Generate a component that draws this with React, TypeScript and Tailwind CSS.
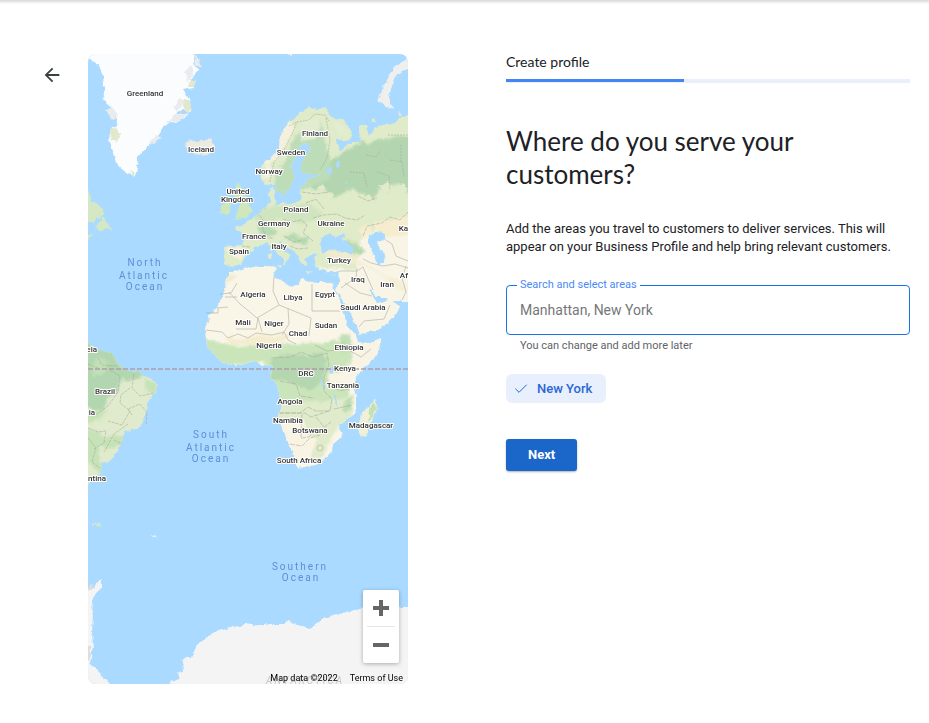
import React from "react";
import { Check } from "lucide-react";

type MapLabel = { text: string; x: number; y: number };

const countries: MapLabel[] = [
  { text: "Greenland", x: 145, y: 96 },
  { text: "Iceland", x: 201, y: 152 },
  { text: "Finland", x: 315, y: 136 },
  { text: "Sweden", x: 291, y: 155 },
  { text: "Norway", x: 269, y: 174 },
  { text: "United", x: 238, y: 194 },
  { text: "Kingdom", x: 237, y: 202 },
  { text: "Poland", x: 296, y: 212 },
  { text: "Germany", x: 274, y: 226 },
  { text: "Ukraine", x: 331, y: 226 },
  { text: "France", x: 254, y: 239 },
  { text: "Italy", x: 279, y: 249 },
  { text: "Spain", x: 239, y: 254 },
  { text: "Turkey", x: 339, y: 263 },
  { text: "Iraq", x: 358, y: 282 },
  { text: "Iran", x: 387, y: 287 },
  { text: "Algeria", x: 253, y: 297 },
  { text: "Libya", x: 293, y: 300 },
  { text: "Egypt", x: 325, y: 297 },
  { text: "Saudi Arabia", x: 363, y: 310 },
  { text: "Mali", x: 243, y: 325 },
  { text: "Niger", x: 274, y: 326 },
  { text: "Sudan", x: 326, y: 328 },
  { text: "Chad", x: 298, y: 336 },
  { text: "Nigeria", x: 269, y: 348 },
  { text: "Ethiopia", x: 349, y: 350 },
  { text: "Kenya", x: 345, y: 371 },
  { text: "DRC", x: 306, y: 376 },
  { text: "Tanzania", x: 343, y: 388 },
  { text: "Angola", x: 290, y: 404 },
  { text: "Namibia", x: 288, y: 423 },
  { text: "Botswana", x: 310, y: 433 },
  { text: "Madagascar", x: 371, y: 428 },
  { text: "South Africa", x: 299, y: 463 },
  { text: "Brazil", x: 105, y: 394 },
];

// names that run off the side of the map
const edgeLeft: MapLabel[] = [
  { text: "ela", x: 97, y: 352 },
  { text: "ia", x: 95, y: 415 },
  { text: "ntina", x: 106, y: 481 },
];
const edgeRight: MapLabel[] = [
  { text: "Ka", x: 408, y: 231 },
  { text: "Af", x: 408, y: 278 },
];

const oceans: MapLabel[] = [
  { text: "North", x: 145, y: 266 },
  { text: "Atlantic", x: 144, y: 279 },
  { text: "Ocean", x: 145, y: 290 },
  { text: "South", x: 211, y: 438 },
  { text: "Atlantic", x: 211, y: 451 },
  { text: "Ocean", x: 211, y: 462 },
  { text: "Southern", x: 300, y: 570 },
  { text: "Ocean", x: 301, y: 581 },
];

const EUROPE =
  "M225 247L243 246L246 239L243 234L236 230L237 227L246 226L248 222L256 218L262 212L267 208L271 202L270 193L274 188L277 191L275 198L277 206L284 203L292 205L301 202L302 190L308 180L323 176L302 174L303 163L312 150L310 144L303 145L292 167L296 178L290 190L283 197L277 186L270 186L263 183L262 167L272 158L280 150L281 138L288 125L298 116L310 108L317 111L325 108L333 118L343 121L352 130L353 138L348 142L337 140L338 147L342 152L350 145L356 142L363 143L360 133L360 127L367 127L370 137L376 129L383 125L393 125L403 118L414 115V302H395L385 298L377 298L373 291L371 290L375 300L379 303L387 302L392 298L394 303L401 308L396 317L387 325L377 332L360 336L357 327L352 315L344 302L337 292L340 282L341 272L332 273L324 270L320 271L316 266L315 259L318 255L310 257L306 261L309 267L303 266L300 260L296 253L287 247L281 242L280 245L286 252L291 257L288 261L285 267L284 260L278 254L273 248L268 243L260 248L255 249L249 255L242 265L233 268L226 265z";
const AFRICA =
  "M230 273l12 -2 11 -4 11 1 10 -2 3 4 -3 7 11 6 9 5 5 -2 3 -6 11 2 5 2 8 -1 8 2 1 6 4 8 3 9 3 9 3 9 9 10 2 7 11 1 12 -5 0 7 -6 12 -11 11 -8 10 -2 11 2 8 0 14 -8 8 -8 6 2 12 -9 7 -1 7 -8 9 -8 5 -12 2 -7 1 -5 -16 -6 -15 -8 -18 4 -16 -5 -17 -6 -9 1 -12 -9 2 -7 -6 -12 2 -8 2 -11 -1 -10 -9 -8 -9 -2 -14 4 -16 9 -11 4 -7z";

const MapView: React.FC = () => {
  return (
    <svg
      viewBox="88 54 320 630"
      className="block h-auto w-full rounded-lg bg-[#aadaff] font-[Roboto,sans-serif]"
      role="img"
      aria-label="Map"
    >
      <defs>
        <filter id="coast" x="-5%" y="-5%" width="110%" height="110%">
          <feTurbulence type="fractalNoise" baseFrequency="0.16" numOctaves="3" seed="4" />
          <feDisplacementMap in="SourceGraphic" scale="5" xChannelSelector="R" yChannelSelector="G" />
        </filter>
        <filter id="soft" x="-20%" y="-20%" width="140%" height="140%" colorInterpolationFilters="sRGB">
          <feGaussianBlur stdDeviation="1" />
        </filter>
        <clipPath id="europe">
          <path d={EUROPE} />
        </clipPath>
        <clipPath id="africa">
          <path d={AFRICA} />
        </clipPath>
        <clipPath id="brazil">
          <path d="M80 338l8 4 9 8 16 4 7 12 10 6 10 1 18 11 -1 9 -9 12 -3 18 -8 7 -12 3 -3 14 -10 15 -10 2 0 9 -7 9 -15 4z" />
        </clipPath>
      </defs>

      <g transform="translate(-1 -1)" filter="url(#coast)">
        {/* Greenland */}
        <path
          fill="#fbfcfd"
          d="M80 50v8l8 1 11 6 5 12 1 13 -1 10 5 4 8 11 1 10 -6 5 -2 9 4 14 3 10 8 9 11 5 2 -8 1 -11 8 -10 11 -9 7 -13 15 -5 11 -6 -14 0 6 -5 9 3 -1 -11 -7 -11 11 -2 -3 -8 7 -9 -4 -12 -2 -8z"
        />
        <path fill="#e9ebec" d="M186 72l7 -6 1 11 -6 6zM166 124l10 -8 14 -2 -8 6zM175 108l6 -9 5 4 -8 10zM107 111l6 -2 7 7 -6 6zM150 144l7 -7 6 1 -8 7zM194 54l4 12 4 4 -2 -9z" />
        <path fill="#e1e8cb" d="M111 130l6 -2 4 8 -3 7 -6 -2zM185 101l5 0 3 10 -6 2 -3 -6zM191 82l5 0 -1 6 -6 0zM131 171l5 4 -3 3z" />
        {/* Iceland */}
        <path fill="#ecebe0" d="M187 144l4 -4 4 3 7 -1 9 -2 4 6 -1 6 -9 5 -8 -2 -9 -3z" />
        {/* Newfoundland */}
        <path fill="#d4e8c3" d="M86 186l4 7 3 9 6 3 5 6 1 5 -7 3 -2 4 -10 0z" />
        <path fill="#d4e8c3" d="M97 229l7 -13 2 6 4 2 3 7 -8 -1 -3 2zM86 237l6 -3 1 2 -5 5z" />
        {/* Novaya Zemlya */}
        <path fill="#eff0ee" d="M412 57l-14 8 -6 9 -8 14 -5 14 6 4 9 4 -5 -14 7 -17 7 -7 9 -3z" />
        <path fill="#e1ebcd" d="M399 112l3 3 1 3 -3 -2zM373 120l3 -1 1 4 -4 0z" />
        {/* British Isles */}
        <path fill="#cfe7bb" d="M236 187l5 -4 1 7 4 7 4 8 3 6 -4 7 -13 2 3 -7 1 -7 -5 -8z" />
        <path fill="#cfe7bb" d="M223 206l6 -4 3 4 -1 8 -9 2z" />
        {/* Svalbard tip */}
        <path fill="#f5f5f5" d="M288 54h6l-3 3z" />

        <path fill="#dfebc9" d={EUROPE} />
        <g clipPath="url(#europe)">
          <g filter="url(#soft)">
            <path fill="#f8f5e7" d="M362 240l16 -10 14 -4 24 0v116h-100l-2 -55 4 -18 25 0 14 3z" />
            <path fill="#f6edcf" d="M374 224l42 -8v18l-16 3 -18 2zM361 230l8 -7 3 9 -8 8z" />
            <path fill="#b3d6b1" d="M345 153l10 -6 8 -5 6 4 6 -5 12 0 10 -4 19 2v52l-8 4 -6 -10 -8 0 -4 8 -10 -4 -6 12 -12 -6 -8 -6 -14 8 -6 2 -8 -8 -14 0 0 -10 8 -2 -4 -18 6 -6 8 8z" />
            <path fill="#bddcb8" d="M276 190l0 -14 12 -16 6 -20 12 -12 8 -12 8 8 3 16 4 12 4 16 -2 12 -30 12 -14 12z" />
            <path fill="#e2edcf" d="M302 124l14 -8 6 10 -6 14 -14 2zM332 120l16 8 4 10 -12 -2z" />
            <path fill="#b7d9b2" d="M285 238l8 -4 8 4 8 1 -2 7 -12 -2zM260 222l10 4 8 7 -8 5 -10 -3zM346 240l8 3 12 8 -6 6 -10 -6z" />
            <path fill="#f3f1de" d="M227 248l15 1 4 6 -5 6 -8 -4zM282 130l10 -8 4 8 -8 14 -12 17 -8 6 -4 -3zM264 168l8 -2 -2 12 -6 2z" />
            <path fill="#c9e3ba" d="M246 206l40 2 24 -4 14 12 -20 9 -24 -6 -18 8z" opacity="0.7" />
            <path fill="#f5edcf" d="M320 255l14 -4 20 3 8 9 12 6 10 7 14 3 12 13 -10 0 -20 -18 -20 -8z" opacity="0.7" />
          </g>
          <path fill="#dfebc9" d="M326 196l6 -3 3 5 -5 3zM362 200l8 -5 4 7 -6 4zM380 186l10 -4 5 8 -9 5zM396 190l9 -5 5 6 -8 5zM318 190l5 -5 5 4 -5 4z" />
        </g>
        {/* inland seas and lakes */}
        <g fill="#aadaff">
          <path d="M321 249l2 -10 8 -5 5 5 8 -5 2 3 -3 3 12 9 -1 5 -10 0 -10 -4 -10 4z" />
          <path d="M370 237l8 -5 8 3 -1 6 -7 2 3 7 5 5 -1 9 -7 1 -4 -11 -5 -10z" />
          <path d="M327 170l5 -2 1 6 -5 2zM337 163l4 -2 -1 9 -3 -2zM345 184l3 -1 0 3z" />
        </g>
        {/* Mediterranean islands */}
        <path fill="#dfebc9" d="M270 247l3 0 0 5 -3 0zM269 254l4 0 -1 6 -3 0zM276 266l7 -1 -1 4zM308 272l8 1 -1 1 -7 0zM333 276l5 -1 -2 2z" />

        <path fill="#f9f5e7" d={AFRICA} />
        <g clipPath="url(#africa)">
          <g filter="url(#soft)">
            <path fill="#cbe5bb" d="M200 338l22 6 20 4 20 -4 12 2 10 -2 16 2 10 -3 14 2 8 -4 14 2 8 10 -4 14 -20 14 14 6 6 0v30l-16 14 -20 4 -42 1 2 -40 -8 -34 -66 8z" />
            <path fill="#b1d5ae" d="M272 358l18 -3 18 2 14 -4 6 8 -4 22 -12 8 -14 -5 -14 -5 -12 0z" opacity="0.85" />
            <path fill="#dfebca" d="M278 404l50 -2 24 -4v20l-16 14 -12 26 -12 4 0 -26 -10 -12 -24 -4z" />
            <path fill="#f8f3e2" d="M276 422l30 0 4 16 8 2 -6 18 -10 4 -12 0z" />
            <path fill="#f8f3e2" d="M352 360l14 -14 16 -10v16l-18 14 -12 12zM330 372l12 2 -4 14 -10 2z" />
            <path fill="#b5d9ad" d="M340 337l10 -3 4 14 -10 6zM346 403l8 -8v16l-10 2z" opacity="0.8" />
            <path fill="#f3ecce" d="M226 338l16 2 20 -4 14 2 14 -4 0 6 -16 4 -20 2 -22 0zM222 285l8 -10 8 2 -10 8z" />
          </g>
        </g>
        <g fill="#aadaff">
          <path d="M329 370l5 -1 1 5 -4 1zM322 380l2 1 2 8 -2 0zM335 395l2 2 1 9 -2 -1z" />
        </g>
        {/* Madagascar */}
        <path fill="#eef0d8" d="M375 400l3 7 -4 12 -6 18 -6 1 -3 -8 3 -15 8 -7z" />
        <path fill="#c4e0b4" d="M374 402l3 6 -4 10 -4 5 2 -12z" />

        {/* South America */}
        <g clipPath="url(#brazil)">
          <rect x="78" y="330" width="90" height="165" fill="#e0eacc" />
          <g filter="url(#soft)">
            <path fill="#b2d6af" d="M78 336l20 12 16 6 8 14 18 4 6 4 -14 6 -10 -2 -4 14 -8 4 -8 18 -10 -8 -14 2z" />
            <path fill="#c6e2b7" d="M84 430l14 2 6 8 12 -4 12 2 -4 8 -16 4 -8 -4 0 16 8 10 -4 6 -20 -20zM146 380l12 4 -2 12 -8 -4zM86 412l14 -3 8 4 -8 7 -14 6z" />
            <path fill="#cde6bd" d="M92 366l8 -8 10 4 -4 12 -12 4z" opacity="0.6" />
          </g>
        </g>
        {/* Falklands and South Georgia */}
        <path fill="#d5e8c8" d="M93 525l3 0 0 2 -3 0zM97 525l4 -1 1 2 -4 1z" />
        <path fill="#eef3f5" d="M152 535l3 1 3 3 -2 0z" />

        {/* Antarctica */}
        <path
          fill="#f4f4f4"
          d="M168 692l2 -8 11 -5 -2 -5 5 -3 -1 -9 4 -4 6 1 4 -11 10 -10 16 -7 12 -3 7 1 5 -5 13 3 10 -2 14 0 6 -4 4 4 9 2 8 2 12 -9 12 -4 8 -2 12 -3 10 -2 18 -2 15 -3 5 4h14v92z"
        />
        <path fill="#f4f4f4" d="M80 602l8 -8 8 -8 7 -5 0 7 -6 4 -4 10 1 13 -1 18 1 15 -3 16 9 9 12 13 4 8H80z" />
        <path fill="#dedede" d="M88 590l6 -5 -1 4 -5 7zM86 646l5 1 1 7 -3 9 -4 -2zM86 631l3 4 -2 4z" />
      </g>

      {/* borders */}
      <g fill="none" stroke="#a4a398" strokeWidth="0.7" opacity="0.75">
        <path d="M225 297l12 0 M237 283l-6 10 -11 1 M229 292l10 11 18 15 22 -13 32 13 M258 318l4 14 M274 277l-1 14 6 14 M312 284v27h28 M288 308l1 16 -7 11 M311 318l-2 18 M206 313h12v-5l10 -1 M236 329l20 0 2 -11 M206 330l16 2 6 6 10 -4 10 4 8 -5 16 2 12 -3 4 8 8 4 M315 345l12 6 20 -2 14 8 10 -8" />
        <path d="M273 358l18 -1 10 -5 12 5 14 -4 2 12 -5 12 0 14 8 8 -2 12 -14 0 -8 -4 -8 6 -20 0 M280 381l16 3 4 12 14 2 M279 413h26l6 4 18 -6 M302 414l-1 24 8 -1 8 -8 M330 385l10 6 12 -3 M334 409l18 -4 M316 417l8 10 7 -5 M290 444l12 2 8 -8 10 -3" strokeDasharray="5 1" />
        <circle cx="320" cy="448" r="3" />
        <path d="M340 271l17 0 6 -4 M341 288l7 -5 8 -5 1 -10 M345 283l15 10 12 3 M363 267l6 14 4 9 M359 327l5 -6 20 -2 6 -14 M363 259l8 4 12 3 12 -2 13 4 M402 300l4 -8 -4 -14 4 -12 M386 240l6 4 4 12 12 5" />
        <path d="M363 236l4 -10 15 -3 8 -6 10 3 8 -8 M313 218l10 -3 14 -1 8 4 12 2 8 -5 M283 219l8 3 10 -2 6 5 -4 8 10 8 M259 215l8 10 12 -2 M250 247l-8 -1 M262 226l4 12 8 0 M284 236l10 6 8 -2 M306 203l10 -4 8 10 M290 246l8 3 10 -1 M302 192l14 2 12 -2 M358 196l10 5 9 -3" strokeDasharray="4 1" />
        <path d="M289 126l8 -4 12 -2 6 -6 10 1 4 6 M270 182l4 -20 10 -12 8 -16 5 -12 M326 118l4 22 -3 18 -7 12 M388 135h20 M366 155l10 2 4 -6 M377 172l12 4 1 14 M390 160l12 2 2 15 M401 145v18 M350 172l14 1 3 14" strokeDasharray="2 1" />
        <path d="M98 358l4 7 16 1 M88 364l10 4 M110 370l10 6 -2 16 -10 14 -14 10 M134 374l-2 14 8 8 14 -3 M130 388l-9 7 -1 8 10 8 -8 14 -14 -4 M132 415l-4 -6 12 -5 7 8 -1 12 M128 424l-14 10 -10 18 M114 440l8 4 M88 428l10 4 8 -1 -2 12 -10 6 M88 438l8 10 -4 14 8 6" strokeDasharray="3 1" />
      </g>

      {/* equator */}
      <path d="M88 369H408" fill="none" stroke="#af9fab" strokeWidth="1.5" strokeDasharray="5 2" />

      <g className="fill-[#5f8dd8] text-[10px] tracking-[2px]" textAnchor="middle">
        {oceans.map((o) => (
          <text key={o.y} x={o.x} y={o.y}>
            {o.text}
          </text>
        ))}
      </g>

      <g className="fill-[#333333] stroke-white text-[8px] font-medium [paint-order:stroke]" strokeWidth="2" strokeLinejoin="round">
        <g textAnchor="middle">
          {countries.map((c) => (
            <text key={c.text} x={c.x} y={c.y}>
              {c.text}
            </text>
          ))}
        </g>
        <g textAnchor="end">
          {[...edgeLeft, ...edgeRight].map((c) => (
            <text key={c.text} x={c.x} y={c.y}>
              {c.text}
            </text>
          ))}
        </g>
      </g>

      <text x="266" y="684" className="fill-[#c8c8c8] text-[10px] italic tracking-[2px]">
        ANTARCTICA
      </text>
    </svg>
  );
};

export default function App() {
  return (
    <div className="min-h-screen bg-white font-[Roboto,sans-serif] text-[#202124]">
      {/* Header shadow */}
      <div className="h-1 bg-linear-to-b from-[#d8d8d8] to-white" />

      <main className="flex items-start pt-[50px] pr-[19px] pb-10 pl-10">
        <button type="button" aria-label="Back" className="mt-[9px] mr-6 flex size-6 shrink-0 items-center justify-center">
          <svg viewBox="0 0 24 24" className="size-[22px]" fill="#3c4043" aria-hidden="true">
            <path d="M20 11H7.8l5.6-5.6L12 4l-8 8 8 8 1.4-1.4L7.8 13H20z" />
          </svg>
        </button>

        {/* Map */}
        <section className="relative w-80 shrink-0">
          <MapView />
          <div className="absolute right-[9px] bottom-[21px] flex w-9 flex-col items-center rounded-xs bg-white shadow-[0_1px_4px_rgba(0,0,0,0.3)]">
            <button type="button" aria-label="Zoom in" className="flex h-9 w-full items-center justify-center">
              <svg viewBox="0 0 16 16" className="size-4" fill="#666666" aria-hidden="true">
                <path d="M6 0h4v6h6v4h-6v6H6v-6H0V6h6z" />
              </svg>
            </button>
            <div className="h-px w-7 bg-[#e6e6e6]" />
            <button type="button" aria-label="Zoom out" className="flex h-9 w-full items-center justify-center">
              <svg viewBox="0 0 16 16" className="size-4" fill="#666666" aria-hidden="true">
                <path d="M0 6h16v4H0z" />
              </svg>
            </button>
          </div>
          <div className="absolute right-[5px] bottom-0 flex gap-3 text-[9px] leading-3 text-black">
            <span>Map data ©2022</span>
            <a href="#">Terms of Use</a>
          </div>
        </section>

        {/* Form */}
        <section className="ml-[98px] min-w-0 flex-1">
          <p className="font-[Lato,sans-serif] text-[14px] leading-4">Create profile</p>
          <div className="mt-[9px] h-1 bg-[#e8f0fe]">
            <div className="h-[3px] w-[44%] bg-[#4285f4]" />
          </div>

          <h1 className="mt-[42px] max-w-[360px] font-[Lato,sans-serif] text-[26px] leading-[33px] font-normal">
            Where do you serve your customers?
          </h1>

          <p className="mt-[29px] text-[13px] leading-[18px]">
            Add the areas you travel to customers to deliver services. This will appear on your Business Profile and
            help bring relevant customers.
          </p>

          <form className="mt-[29px]" onSubmit={(e) => e.preventDefault()}>
            <div className="relative">
              <label
                htmlFor="areas"
                className="absolute -top-2 left-[11px] bg-white px-[3px] text-[11px] leading-4 text-[#4a8af4]"
              >
                Search and select areas
              </label>
              <input
                id="areas"
                type="text"
                placeholder="Manhattan, New York"
                className="block h-[50px] w-full rounded border border-[#1a73e8] px-[13px] text-[14px] outline-none placeholder:text-[#757779]"
              />
            </div>
            <p className="mt-[3px] ml-[14px] text-[11px] leading-4 text-[#5f6368]">You can change and add more later</p>

            <button
              type="button"
              className="mt-5 flex h-[29px] items-center gap-2 rounded-md bg-[#e8f0fe] pr-[14px] pl-[7px] text-[13px] font-medium text-[#2a66d4]"
            >
              <Check className="size-4" strokeWidth={1.5} />
              New York
            </button>

            <button
              type="submit"
              className="mt-9 h-8 rounded-[3px] bg-[#1b66c9] px-[22px] text-[13px] font-bold text-white shadow-[0_1px_2px_rgba(60,64,67,0.4)]"
            >
              Next
            </button>
          </form>
        </section>
      </main>
    </div>
  );
}
